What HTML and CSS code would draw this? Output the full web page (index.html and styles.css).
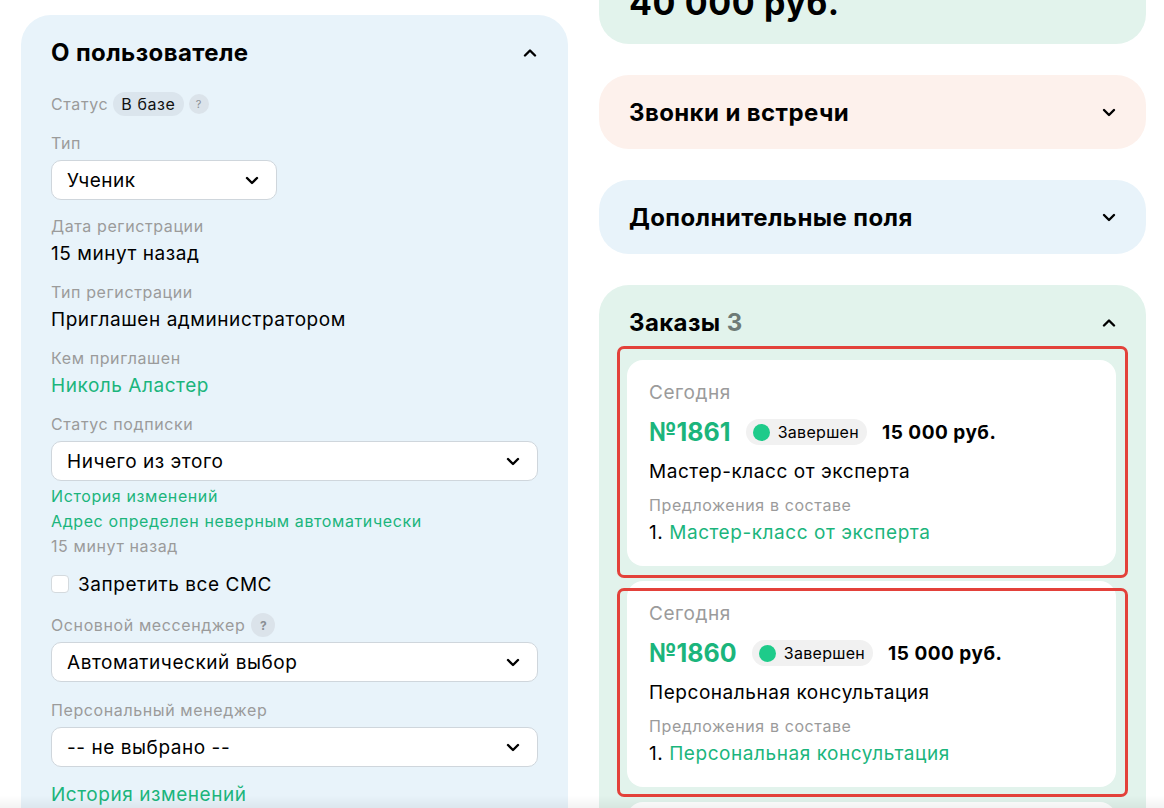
FILE: index.html
```html
<!DOCTYPE html>
<html lang="ru">
  <head>
    <meta charset="UTF-8" />
    <meta name="viewport" content="width=device-width, initial-scale=1.0" />
    <title>Карточка пользователя</title>
    <link rel="stylesheet" href="styles.css">
  </head>
  <body>
    <div class="page">
      <!-- Левая колонка -->
      <section class="panel panel-blue user-panel">
        <div class="panel-head">
          <h2>О пользователе</h2>
          <svg class="chev" width="14" height="9" viewBox="0 0 14 9"><path d="M2 7.5 L7 2.5 L12 7.5" /></svg>
        </div>

        <div class="status-row">
          <span class="label">Статус</span>
          <span class="tag">В базе</span>
          <span class="help small">?</span>
        </div>

        <div class="label mt-17">Тип</div>
        <div class="select select-short">
          <span>Ученик</span>
          <svg class="chev" width="14" height="9" viewBox="0 0 14 9"><path d="M2 2 L7 7 L12 2" /></svg>
        </div>

        <div class="field">
          <div class="label">Дата регистрации</div>
          <div class="value">15 минут назад</div>
        </div>
        <div class="field">
          <div class="label">Тип регистрации</div>
          <div class="value">Приглашен администратором</div>
        </div>
        <div class="field">
          <div class="label">Кем приглашен</div>
          <div class="value link">Николь Аластер</div>
        </div>

        <div class="label mt-16">Статус подписки</div>
        <div class="select">
          <span>Ничего из этого</span>
          <svg class="chev" width="14" height="9" viewBox="0 0 14 9"><path d="M2 2 L7 7 L12 2" /></svg>
        </div>

        <div class="notes">
          <div class="link">История изменений</div>
          <div class="link">Адрес определен неверным автоматически</div>
          <div class="muted">15 минут назад</div>
        </div>

        <label class="check">
          <span class="box"></span>
          Запретить все СМС
        </label>

        <div class="label-row">
          <span class="label">Основной мессенджер</span>
          <span class="help">?</span>
        </div>
        <div class="select mt-5">
          <span>Автоматический выбор</span>
          <svg class="chev" width="14" height="9" viewBox="0 0 14 9"><path d="M2 2 L7 7 L12 2" /></svg>
        </div>

        <div class="label mt-18">Персональный менеджер</div>
        <div class="select mt-5">
          <span>-- не выбрано --</span>
          <svg class="chev" width="14" height="9" viewBox="0 0 14 9"><path d="M2 2 L7 7 L12 2" /></svg>
        </div>

        <div class="value link mt-16">История изменений</div>
      </section>

      <!-- Правая колонка -->
      <div class="side">
        <section class="panel panel-green total">
          <div class="total-sum">40 000 руб.</div>
        </section>

        <section class="panel panel-pink">
          <div class="panel-head">
            <h2>Звонки и встречи</h2>
            <svg class="chev" width="14" height="9" viewBox="0 0 14 9"><path d="M2 2 L7 7 L12 2" /></svg>
          </div>
        </section>

        <section class="panel panel-blue">
          <div class="panel-head">
            <h2>Дополнительные поля</h2>
            <svg class="chev" width="14" height="9" viewBox="0 0 14 9"><path d="M2 2 L7 7 L12 2" /></svg>
          </div>
        </section>

        <section class="panel panel-green orders">
          <div class="panel-head">
            <h2>Заказы <span class="count">3</span></h2>
            <svg class="chev" width="14" height="9" viewBox="0 0 14 9"><path d="M2 7.5 L7 2.5 L12 7.5" /></svg>
          </div>

          <div class="order">
            <div class="muted-lg">Сегодня</div>
            <div class="order-row">
              <span class="order-num">№1861</span>
              <span class="state"><i class="dot"></i>Завершен</span>
              <span class="price">15 000 руб.</span>
            </div>
            <div class="value order-title">Мастер-класс от эксперта</div>
            <div class="label order-sub">Предложения в составе</div>
            <div class="value order-item">1. <span class="link">Мастер-класс от эксперта</span></div>
          </div>

          <div class="order">
            <div class="muted-lg">Сегодня</div>
            <div class="order-row">
              <span class="order-num">№1860</span>
              <span class="state"><i class="dot"></i>Завершен</span>
              <span class="price">15 000 руб.</span>
            </div>
            <div class="value order-title">Персональная консультация</div>
            <div class="label order-sub">Предложения в составе</div>
            <div class="value order-item">1. <span class="link">Персональная консультация</span></div>
          </div>

          <div class="order"></div>

          <!-- Выделения поверх карточек -->
          <div class="mark mark-1"></div>
          <div class="mark mark-2"></div>
        </section>
      </div>
    </div>
    <div class="bottom-fade"></div>
  </body>
</html>
```

FILE: styles.css
```css
body {
  margin: 0;
  font-family: Inter, "Noto Sans", sans-serif;
  color: #000;
  background: #fff;
  overflow: hidden;
  height: 808px;
}

.page {
  display: flex;
  align-items: flex-start;
  gap: 31px;
  padding: 15px 18px 0 21px;
}

.panel {
  border-radius: 30px;
  box-sizing: border-box;
}

.panel-blue {
  background: #e8f3fa;
}

.panel-green {
  background: #e2f3ec;
}

.panel-pink {
  background: #fdf1ec;
}

.panel-head {
  display: flex;
  align-items: center;
  justify-content: space-between;
  height: 28px;
}

.panel-head h2 {
  margin: 0;
  font-size: 24px;
  font-weight: 700;
  letter-spacing: 0.4px;
}

.chev {
  flex: none;
}

.chev path {
  fill: none;
  stroke: #000;
  stroke-width: 2.4;
  stroke-linecap: round;
  stroke-linejoin: round;
}

/* Левая колонка */
.user-panel {
  width: 547px;
  height: 900px;
  padding: 23px 30px 0 30px;
}

.user-panel .panel-head .chev {
  margin-right: 1px;
}

.label {
  font-size: 16px;
  line-height: 20px;
  letter-spacing: 0.6px;
  color: #9b9b9b;
}

.value {
  font-size: 19px;
  line-height: 24px;
  letter-spacing: 0.55px;
}

.link {
  color: #1bb57c;
}

.muted {
  color: #9b9b9b;
}

.status-row {
  display: flex;
  align-items: center;
  height: 24px;
  margin-top: 26px;
}

.tag {
  margin-left: 5px;
  background: #dbe5ed;
  border-radius: 12px;
  padding: 0 8px;
  height: 24px;
  line-height: 24px;
  font-size: 16px;
  letter-spacing: 0.6px;
  color: #111;
}

.help {
  display: inline-flex;
  align-items: center;
  justify-content: center;
  width: 24px;
  height: 24px;
  border-radius: 50%;
  background: #dbe3ea;
  color: #8a8f94;
  font-size: 12px;
  font-weight: 700;
  margin-left: 5px;
}

.help.small {
  width: 20px;
  height: 20px;
  font-size: 11px;
  font-weight: 400;
}

.mt-5 { margin-top: 5px; }
.mt-16 { margin-top: 16px; }
.mt-17 { margin-top: 17px; }
.mt-18 { margin-top: 18px; }

.select {
  display: flex;
  align-items: center;
  justify-content: space-between;
  height: 40px;
  box-sizing: border-box;
  margin-top: 7px;
  padding: 0 17px 0 15px;
  background: #fff;
  border: 1px solid #cfd6dc;
  border-radius: 10px;
  font-size: 19px;
  letter-spacing: 0.55px;
}

.select-short {
  width: 226px;
}

.field {
  margin-top: 16px;
}

.field .value {
  margin-top: 6px;
}

.notes {
  margin-top: 3px;
  font-size: 16px;
  line-height: 25px;
  letter-spacing: 0.6px;
}

.check {
  display: flex;
  align-items: center;
  gap: 9px;
  margin-top: 13px;
  height: 24px;
  font-size: 19px;
  letter-spacing: 0.55px;
}

.check .box {
  width: 16px;
  height: 16px;
  background: #fff;
  border: 1px solid #d4dade;
  border-radius: 4px;
}

.label-row {
  display: flex;
  align-items: center;
  height: 24px;
  margin-top: 17px;
}

.label-row .help {
  margin-left: 6px;
}

.label-row + .select {
  margin-top: 5px;
}

/* Правая колонка */
.side {
  width: 547px;
  display: flex;
  flex-direction: column;
  gap: 31px;
  margin-top: -90px;
}

.panel-pink,
.side > .panel-blue {
  padding: 23px 30px;
}

.total {
  height: 119px;
  padding: 72px 30px 0;
}

.total-sum {
  font-size: 34px;
  line-height: 40px;
  font-weight: 700;
  letter-spacing: 0.6px;
  margin-top: -14px;
}

.orders {
  position: relative;
  padding: 23px 30px 0 28px;
  height: 560px;
}

.orders .panel-head {
  padding-left: 2px;
}

.count {
  color: #6e7b77;
}

.order {
  background: #fff;
  border-radius: 16px;
  padding: 21px 22px;
  margin-top: 15px;
}

.orders .panel-head + .order {
  margin-top: 24px;
}

.muted-lg {
  font-size: 19px;
  line-height: 24px;
  letter-spacing: 0.55px;
  color: #9b9b9b;
}

.order-row {
  display: flex;
  align-items: center;
  height: 28px;
  margin-top: 13px;
}

.order-num {
  font-size: 25px;
  font-weight: 700;
  color: #1bb57c;
}

.state {
  display: inline-flex;
  align-items: center;
  gap: 8px;
  margin-left: 15px;
  height: 26px;
  padding: 0 8px 0 7px;
  border-radius: 13px;
  background: #f1f1f1;
  font-size: 16px;
  letter-spacing: 0.3px;
}

.dot {
  width: 17px;
  height: 17px;
  border-radius: 50%;
  background: #1ecb8a;
}

.price {
  margin-left: 15px;
  font-size: 19px;
  font-weight: 700;
  letter-spacing: 0.5px;
}

.order-title {
  margin-top: 14px;
}

.order-sub {
  margin-top: 11px;
}

.order-item {
  margin-top: 6px;
}

.mark {
  position: absolute;
  left: 18px;
  width: 511px;
  border: 3px solid #e3413a;
  border-radius: 7px;
  box-sizing: border-box;
}

.mark-1 {
  top: 61px;
  height: 232px;
}

.mark-2 {
  top: 303px;
  height: 209px;
}

.bottom-fade {
  position: fixed;
  left: 0;
  right: 0;
  bottom: 0;
  height: 12px;
  background: linear-gradient(rgba(0, 0, 0, 0), rgba(0, 0, 0, 0.05));
}
```
